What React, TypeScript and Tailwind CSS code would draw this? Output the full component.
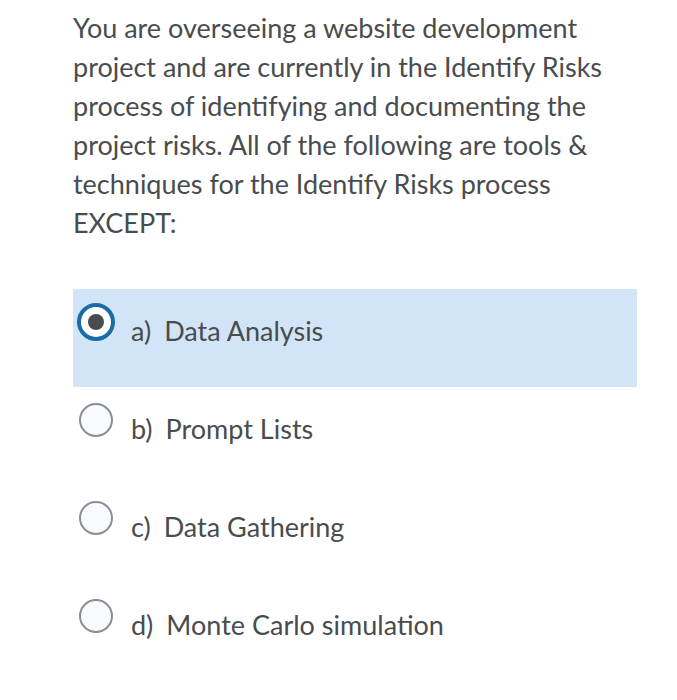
import React from "react";

const options = [
  { letter: "a)", label: "Data Analysis", checked: true },
  { letter: "b)", label: "Prompt Lists", checked: false },
  { letter: "c)", label: "Data Gathering", checked: false },
  { letter: "d)", label: "Monte Carlo simulation", checked: false },
];

function Radio({ checked }: { checked: boolean }) {
  if (checked) {
    return (
      <div className="w-[38px] h-[38px] rounded-full border-[4px] border-[#1a6ca8] bg-white flex items-center justify-center shrink-0">
        <div className="w-[16px] h-[16px] rounded-full bg-[#494c4e]" />
      </div>
    );
  }
  return (
    <div className="w-[38px] h-[38px] p-[2px] shrink-0 flex items-center justify-center">
      <div className="w-[34px] h-[34px] rounded-full border-2 border-[#8a8f92] bg-[#f9faff]" />
    </div>
  );
}

export default function App() {
  return (
    <div
      className="w-[677px] h-[700px] bg-white text-[#494c4e]"
      style={{ fontFamily: "Lato, 'Noto Sans', sans-serif" }}
    >
      <div className="pl-[73px] pr-[40px] pt-[8px]">
        <p className="text-[27px] leading-[39px] w-[564px]">
          You are overseeing a website development project and are currently in the Identify Risks
          process of identifying and documenting the project risks. All of the following are tools
          &amp; techniques for the Identify Risks process EXCEPT:
        </p>
        <div className="mt-[47px] w-[564px] flex flex-col">
          {options.map((o) => (
            <div
              key={o.letter}
              className={`h-[98px] flex items-start pl-[4px] pt-[14px] ${
                o.checked ? "bg-[#d2e5f8]" : ""
              }`}
            >
              <Radio checked={o.checked} />
              <div className="ml-[16px] mt-[10px] text-[27px] leading-[36px] flex">
                <span>{o.letter}</span>
                <span className="ml-[13px]">{o.label}</span>
              </div>
            </div>
          ))}
        </div>
      </div>
    </div>
  );
}
